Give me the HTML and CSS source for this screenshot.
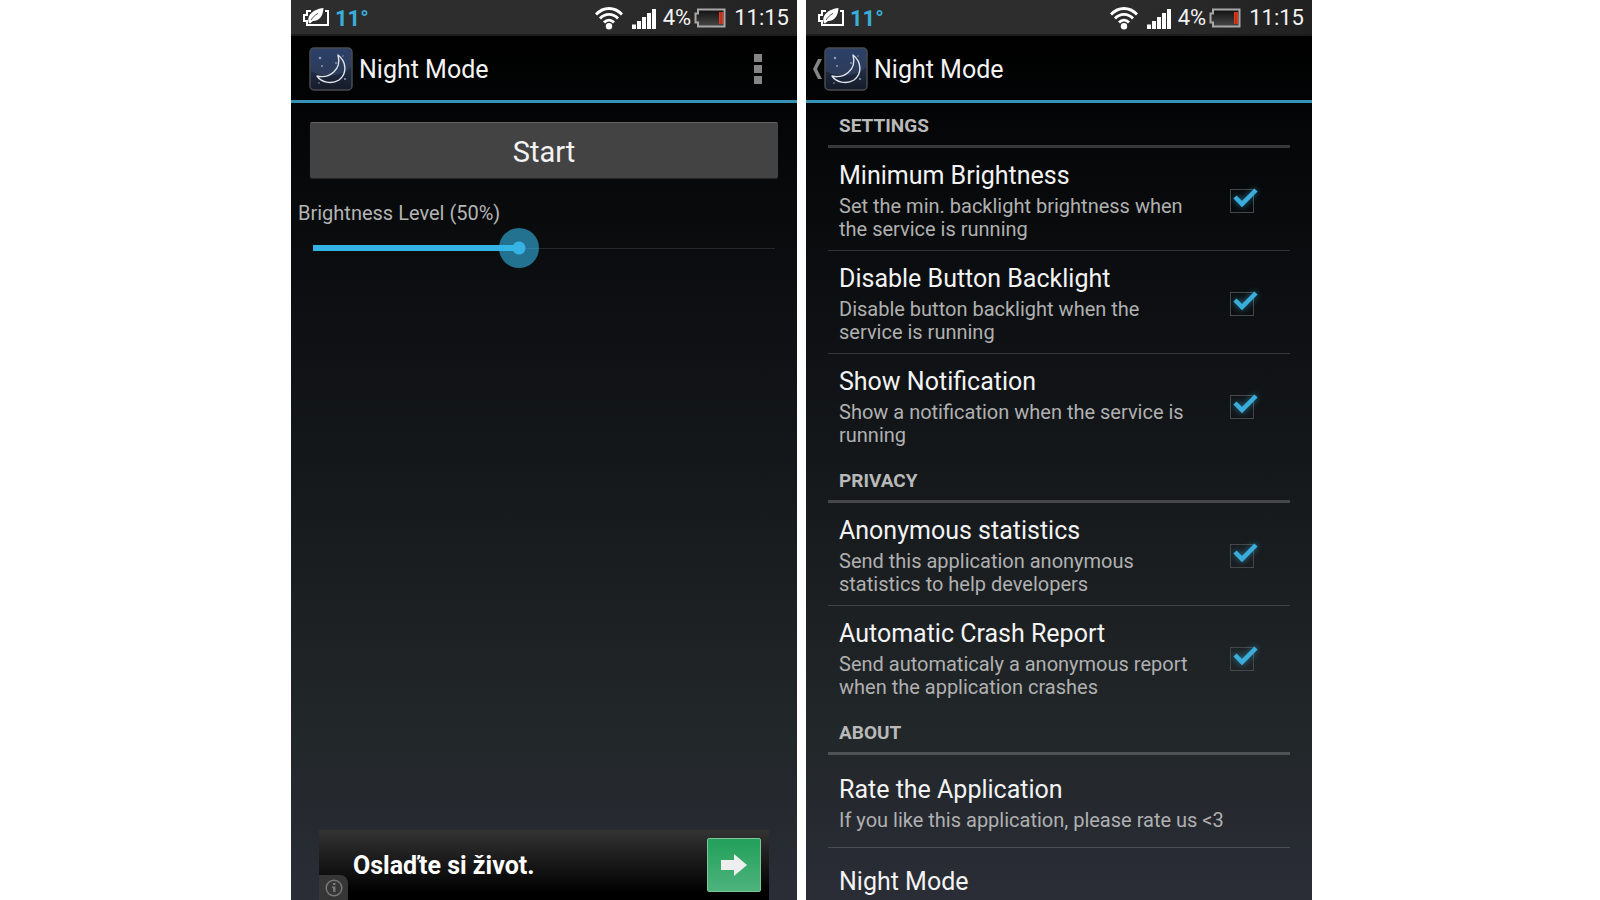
FILE: index.html
```
<!DOCTYPE html>
<html lang="en">
<head>
    <meta charset="UTF-8">
    <meta name="viewport" content="width=device-width, initial-scale=1.0">
    <title>Night Mode</title>
    <link rel="stylesheet" href="styles.css">
</head>
<body>
    <!-- Shared icons -->
    <svg class="sprite" aria-hidden="true">
        <defs>
            <linearGradient id="moonBg" x1="0" y1="0" x2="0" y2="1">
                <stop offset="0" stop-color="#2b3f68"/>
                <stop offset="1" stop-color="#151b27"/>
            </linearGradient>
            <linearGradient id="moonShine" x1="0" y1="0" x2="0" y2="1">
                <stop offset="0" stop-color="#2c4069"/>
                <stop offset="1" stop-color="#2c3b57"/>
            </linearGradient>
            <linearGradient id="cell" x1="0" y1="0" x2="0" y2="1">
                <stop offset="0" stop-color="#111"/>
                <stop offset="1" stop-color="#484848"/>
            </linearGradient>
        </defs>
        <symbol id="icon-eco" viewBox="0 0 28 20">
            <path d="M9 3H5v4H2v6h3v4h21V3h-3" fill="none" stroke="#fff" stroke-width="2"/>
            <path d="M7 15C4 7 12 1 21.500 0 21 8 18 12.500 11 13L8 15.500z" fill="#fff"/>
            <path d="M9 12C11 9 13 7 16 5.500" fill="none" stroke="#2b2b2b" stroke-width=".8"/>
        </symbol>
        <symbol id="icon-wifi" viewBox="0 0 28 23">
            <g fill="none" stroke="#fff" stroke-width="2.800">
                <path d="M1 7.500C8.500-.5 19.500-.5 27 7.500"/>
                <path d="M5 11.500c5-5.500 13-5.500 18 0"/>
                <path d="M9 15.500c3-3.300 7-3.300 10 0"/>
            </g>
            <circle cx="14" cy="19.300" r="3.200" fill="#fff"/>
        </symbol>
        <symbol id="icon-signal" viewBox="0 0 24 20">
            <path d="M0 15.500h4V20H0zM5 12h4v8H5zM10 8h4v12h-4zM15 4h4v16h-4zM20 0h4v20h-4z" fill="#fff"/>
        </symbol>
        <symbol id="icon-battery" viewBox="0 0 32 20">
            <path d="M4 1.500h26.500v17H4v-4H1.500v-9H4z" fill="url(#cell)" stroke="#a8a8a8" stroke-width="2"/>
            <path d="M25 4h4v12h-4z" fill="#dc3a1e"/>
            <path d="M27 4v12" stroke="#8c2413" stroke-width=".7"/>
        </symbol>
        <symbol id="icon-moon" viewBox="0 0 44 44">
            <rect x="1" y="1" width="42" height="42" rx="4" fill="url(#moonBg)" stroke="#4a4b50" stroke-width="1.500"/>
            <path d="M2 5q0-3 3-3h34q3 0 3 3v15C33 30 12 31 2 24z" fill="url(#moonShine)"/>
            <path d="M29 8c9 7 9 19 1 25-8 5-18 2-22-4 12 3 25-6 21-21z" fill="none" stroke="#dfe3e8" stroke-width="1.400" stroke-linejoin="round"/>
            <g fill="#8d9ab3">
                <circle cx="11" cy="11" r="1.300"/>
                <circle cx="13" cy="19" r="1"/>
                <circle cx="27" cy="16" r=".9"/>
                <circle cx="34" cy="9" r=".8"/>
                <circle cx="10" cy="36" r=".8"/>
                <circle cx="36" cy="32" r="1"/>
            </g>
        </symbol>
        <symbol id="icon-check" viewBox="0 0 36 30">
            <path d="M8 14l7 7L29 7" fill="none" stroke="#3aaddb" stroke-width="4.500"/>
        </symbol>
    </svg>

    <main class="screens">
        <section class="screen screen-main">
            <div class="status-bar">
                <svg class="eco"><use href="#icon-eco"/></svg>
                <span class="temperature">11°</span>
                <svg class="wifi"><use href="#icon-wifi"/></svg>
                <svg class="signal"><use href="#icon-signal"/></svg>
                <span class="charge">4%</span>
                <svg class="battery"><use href="#icon-battery"/></svg>
                <span class="clock">11:15</span>
            </div>
            <header class="action-bar">
                <svg class="app-icon"><use href="#icon-moon"/></svg>
                <h1>Night Mode</h1>
                <button class="overflow" type="button" aria-label="More options"><i></i><i></i><i></i></button>
            </header>

            <div class="controls">
                <button class="start" type="button">Start</button>
                <label for="brightness">Brightness Level (50%)</label>
                <input type="range" id="brightness" min="0" max="100" value="44">
            </div>

            <div class="ad">
                <strong>Oslaďte si život.</strong>
                <button class="ad-go" type="button" aria-label="Open">
                    <svg viewBox="0 0 26 22"><path d="M0 6h13V0l13 11-13 11v-6H0z" fill="#eee"/></svg>
                </button>
                <span class="ad-info">
                    <svg viewBox="0 0 18 18">
                        <circle cx="9" cy="9" r="7.800" fill="none" stroke="#777" stroke-width="1.500"/>
                        <path d="M8 4h2.500v2H8zM7 7.500h3.500V13H8V9H7z" fill="#777"/>
                    </svg>
                </span>
            </div>
        </section>

        <section class="screen screen-settings">
            <div class="status-bar">
                <svg class="eco"><use href="#icon-eco"/></svg>
                <span class="temperature">11°</span>
                <svg class="wifi"><use href="#icon-wifi"/></svg>
                <svg class="signal"><use href="#icon-signal"/></svg>
                <span class="charge">4%</span>
                <svg class="battery"><use href="#icon-battery"/></svg>
                <span class="clock">11:15</span>
            </div>
            <header class="action-bar">
                <a class="up" href="#" aria-label="Navigate up">
                    <svg viewBox="0 0 10 20"><path d="M6 0h4L5 10l5 10H6L1 10z" fill="#858585"/></svg>
                </a>
                <svg class="app-icon"><use href="#icon-moon"/></svg>
                <h1>Night Mode</h1>
            </header>

            <div class="preferences">
                <h2>SETTINGS</h2>
                <label class="pref">
                    <span class="pref-text">
                        <span class="pref-title">Minimum Brightness</span>
                        <span class="pref-summary">Set the min. backlight brightness when the service is running</span>
                    </span>
                    <span class="check"><input type="checkbox" checked><svg><use href="#icon-check"/></svg></span>
                </label>
                <label class="pref">
                    <span class="pref-text">
                        <span class="pref-title">Disable Button Backlight</span>
                        <span class="pref-summary">Disable button backlight when the service is running</span>
                    </span>
                    <span class="check"><input type="checkbox" checked><svg><use href="#icon-check"/></svg></span>
                </label>
                <label class="pref last">
                    <span class="pref-text">
                        <span class="pref-title">Show Notification</span>
                        <span class="pref-summary">Show a notification when the service is running</span>
                    </span>
                    <span class="check"><input type="checkbox" checked><svg><use href="#icon-check"/></svg></span>
                </label>

                <h2>PRIVACY</h2>
                <label class="pref">
                    <span class="pref-text">
                        <span class="pref-title">Anonymous statistics</span>
                        <span class="pref-summary">Send this application anonymous statistics to help developers</span>
                    </span>
                    <span class="check"><input type="checkbox" checked><svg><use href="#icon-check"/></svg></span>
                </label>
                <label class="pref last">
                    <span class="pref-text">
                        <span class="pref-title">Automatic Crash Report</span>
                        <span class="pref-summary">Send automaticaly a anonymous report when the application crashes</span>
                    </span>
                    <span class="check"><input type="checkbox" checked><svg><use href="#icon-check"/></svg></span>
                </label>

                <h2>ABOUT</h2>
                <a class="pref" href="#">
                    <span class="pref-text">
                        <span class="pref-title">Rate the Application</span>
                        <span class="pref-summary">If you like this application, please rate us &lt;3</span>
                    </span>
                </a>
                <a class="pref last" href="#">
                    <span class="pref-text">
                        <span class="pref-title">Night Mode</span>
                        <span class="pref-summary"></span>
                    </span>
                </a>
            </div>
        </section>
    </main>
</body>
</html>
```
FILE: styles.css
```
* {
    box-sizing: border-box;
}

body {
    margin: 0;
    height: 100vh;
    overflow: hidden;
    background: #fff;
    font-family: Roboto, sans-serif;
    color: #f3f3f3;
}

button {
    font-family: inherit;
    color: inherit;
    padding: 0;
    border: none;
    background: none;
}

a {
    color: inherit;
    text-decoration: none;
}

.sprite {
    position: absolute;
    width: 0;
    height: 0;
}

.screens {
    display: grid;
    grid-template-columns: 291fr 506fr 9fr 506fr 288fr;
    height: 100%;
}

.screen {
    display: flex;
    flex-direction: column;
    min-width: 0;
    height: 100vh;
    overflow: hidden;
    background: linear-gradient(#000 4%, #040607 14%, #14171a 50%, #22272a 82%, #2a2d36);
}

.screen-main {
    grid-column: 2;
}

.screen-settings {
    grid-column: 4;
}

/* Status bar */
.status-bar {
    flex: none;
    display: flex;
    align-items: center;
    height: 36px;
    padding: 2px 8px 0 11px;
    background: linear-gradient(100deg, #2d2d2d 60%, #202020);
    border-bottom: 2px solid #1c1c1c;
    font-size: 22px;
    line-height: 32px;
}

.eco {
    width: 28px;
    height: 20px;
}

.temperature {
    margin: 2px auto 0 5px;
    color: #3aaddb;
    font-weight: 700;
}

.wifi {
    width: 28px;
    height: 23px;
}

.signal {
    width: 24px;
    height: 20px;
    margin: 2px 7px 0 9px;
}

.battery {
    width: 32px;
    height: 20px;
    margin: 0 8px 0 3px;
}

/* Action bar */
.action-bar {
    flex: none;
    display: flex;
    align-items: center;
    height: 67px;
    padding: 2px 35px 0 18px;
    border-bottom: 3px solid #3793b5;
}

.screen-settings .action-bar {
    padding-left: 6px;
}

.up {
    display: flex;
    width: 12px;
}

.up svg {
    width: 10px;
    height: 20px;
}

.app-icon {
    width: 44px;
    height: 44px;
}

h1 {
    margin: 2px auto 0 6px;
    font-size: 25px;
    font-weight: 400;
    line-height: 32px;
}

.overflow {
    display: grid;
    gap: 3px;
}

.overflow i {
    width: 8px;
    height: 8px;
    background: #858585;
}

/* Night mode controls */
.controls {
    display: flex;
    flex-direction: column;
    padding: 19px 19px 0;
}

.start {
    height: 56px;
    padding-top: 2px;
    border-top: 1px solid #626262;
    border-radius: 2px;
    background: #434343;
    box-shadow: 0 1px 1px #2a2a2a;
    font-size: 29px;
}

.controls label {
    margin: 22px 0 0 -12px;
    color: #b4b4b4;
    font-size: 20px;
    line-height: 26px;
}

input[type="range"] {
    -webkit-appearance: none;
    appearance: none;
    height: 40px;
    margin: 2px 3px;
    background: none;
}

input[type="range"]::-webkit-slider-runnable-track {
    height: 6px;
    background:
        linear-gradient(#35b3e5, #35b3e5) left / 44% 100% no-repeat,
        linear-gradient(#272829, #272829) center / 100% 1px no-repeat;
}

input[type="range"]::-webkit-slider-thumb {
    -webkit-appearance: none;
    width: 40px;
    height: 40px;
    margin-top: -17px;
    border-radius: 50%;
    background: radial-gradient(circle, #35b3e5 6px, rgba(51, 181, 229, 0.6) 7px);
}

/* Ad banner */
.ad {
    position: relative;
    display: flex;
    align-items: center;
    justify-content: space-between;
    height: 70px;
    margin: auto 28px 0;
    padding: 0 8px 0 34px;
    background: linear-gradient(#333, #000 90%);
}

.ad strong {
    font-size: 25px;
    color: #fff;
}

.ad-go {
    display: flex;
    align-items: center;
    justify-content: center;
    width: 54px;
    height: 54px;
    border: 1px solid #7fc49c;
    border-radius: 2px;
    background: linear-gradient(#22a05a, #4db37c);
}

.ad-go svg {
    width: 26px;
    height: 22px;
}

.ad-info {
    position: absolute;
    left: 0;
    bottom: 0;
    display: flex;
    align-items: center;
    justify-content: center;
    width: 29px;
    height: 25px;
    border-top-right-radius: 8px;
    background: #363636;
}

.ad-info svg {
    width: 18px;
    height: 18px;
}

/* Preference list */
.preferences {
    padding: 0 22px;
}

h2 {
    height: 45px;
    margin: 0;
    padding: 10px 11px 0;
    border-bottom: 3px solid rgba(255, 255, 255, 0.2);
    color: #b9b9b9;
    font-size: 19px;
    font-weight: 700;
    line-height: 26px;
}

.pref {
    display: flex;
    align-items: center;
    min-height: 93px;
    padding: 13px 36px 9px 11px;
    border-bottom: 1px solid rgba(255, 255, 255, 0.16);
}

.pref.last {
    padding-bottom: 10px;
    border-bottom-color: transparent;
}

.pref-text {
    flex: 1;
}

.pref-title,
.pref-summary {
    display: block;
}

.pref-title {
    margin-bottom: 4px;
    font-size: 25px;
    line-height: 30px;
}

.pref-summary {
    min-height: 23px;
    color: #b0b0b0;
    font-size: 20px;
    line-height: 23px;
}

.check {
    position: relative;
    width: 24px;
    height: 24px;
    margin-left: 30px;
}

.check input {
    -webkit-appearance: none;
    appearance: none;
    display: block;
    width: 24px;
    height: 24px;
    margin: 0;
    border: 1px solid #454749;
}

.check svg {
    position: absolute;
    left: -3px;
    top: -6px;
    width: 36px;
    height: 30px;
    filter: drop-shadow(0 0 3px rgba(51, 181, 229, 0.6));
    visibility: hidden;
    pointer-events: none;
}

.check input:checked + svg {
    visibility: visible;
}
```
